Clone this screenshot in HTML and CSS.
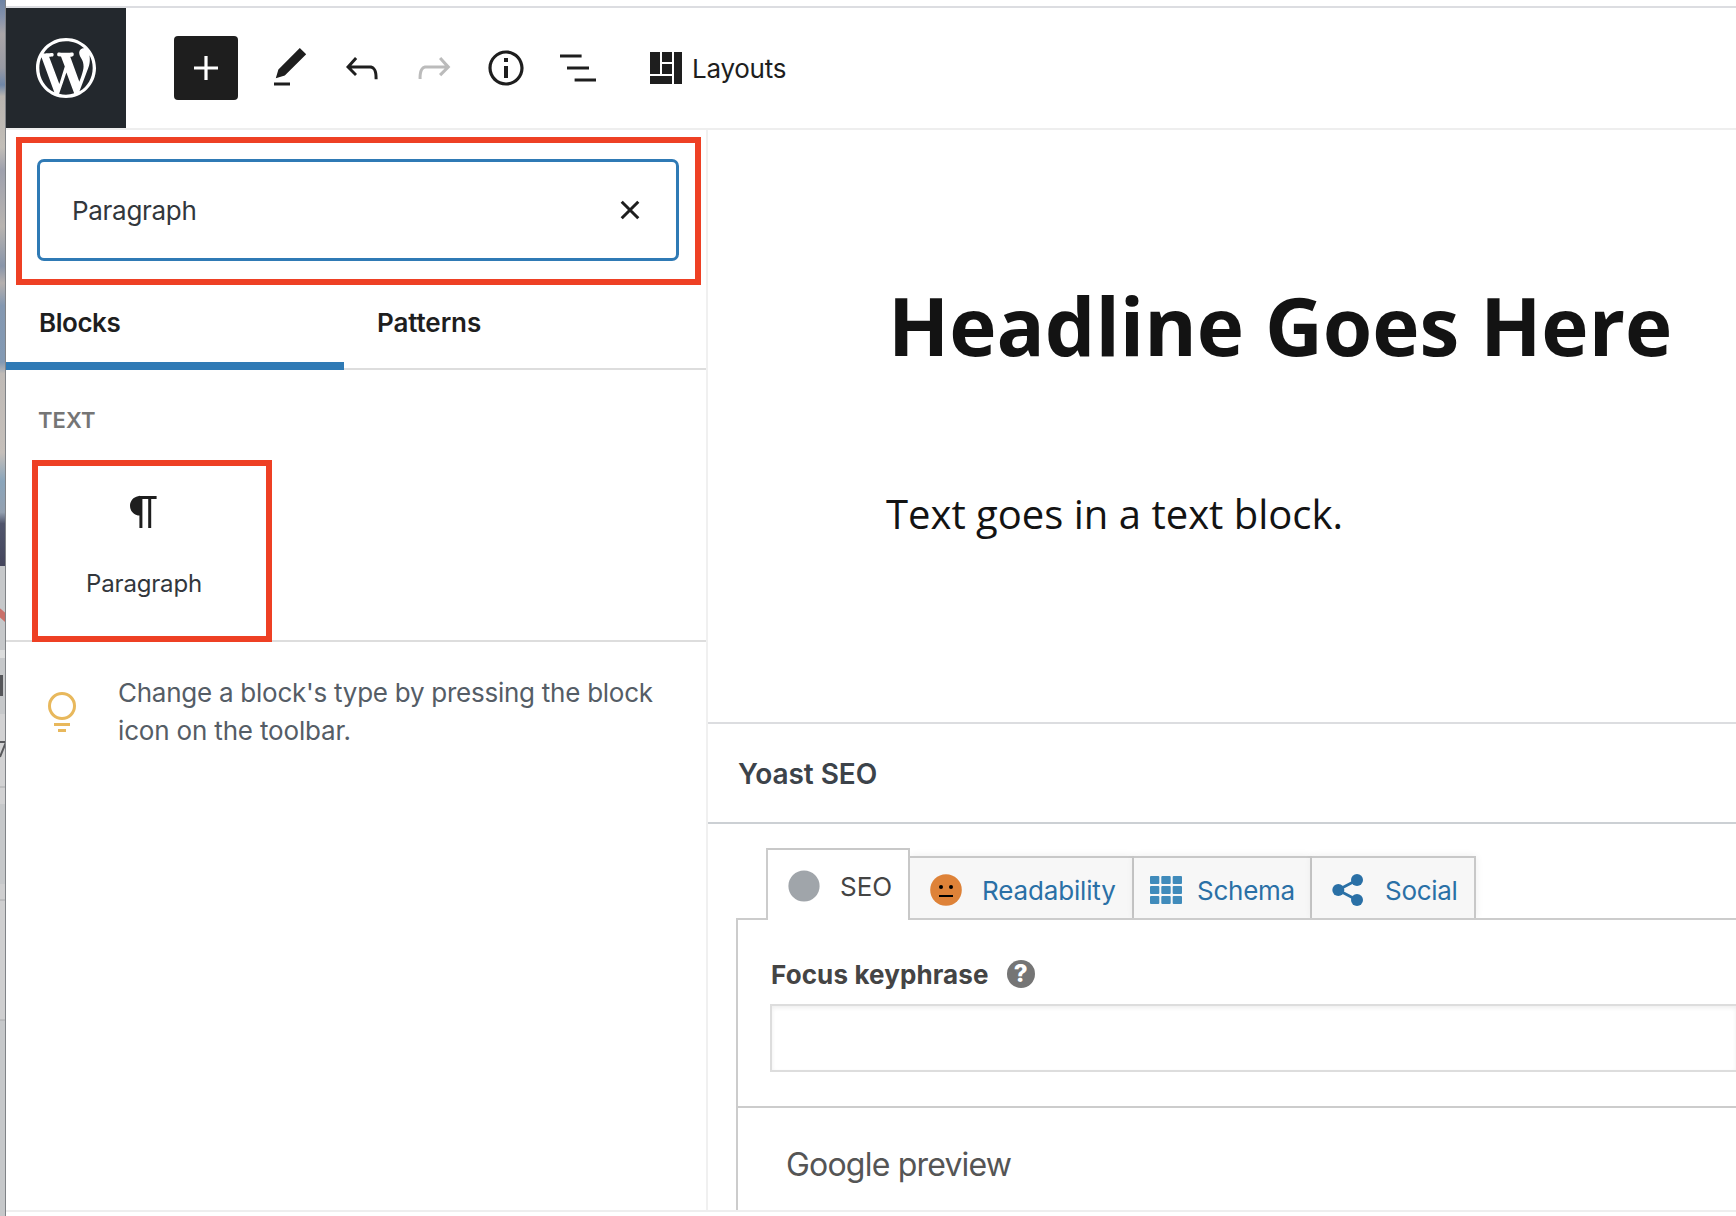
FILE: index.html
```html
<!DOCTYPE html>
<html lang="en">
<head>
<meta charset="utf-8">
<title>Edit Page</title>
<link rel="stylesheet" href="styles.css">
</head>
<body>
<div class="screen">
  <svg class="backdrop" viewBox="0 0 6 1216" aria-hidden="true">
    <defs>
      <linearGradient id="sky" x1="0" y1="0" x2="0" y2="1">
        <stop offset="0" stop-color="#6d83a4"/><stop offset=".03" stop-color="#8592ab"/><stop offset=".06" stop-color="#aaa6a8"/>
        <stop offset=".12" stop-color="#989aa3"/><stop offset=".15" stop-color="#6f87a8"/><stop offset=".17" stop-color="#b9b5b0"/>
        <stop offset=".26" stop-color="#c2beb8"/><stop offset=".3" stop-color="#9fa1ad"/><stop offset=".4" stop-color="#b8b4b0"/>
        <stop offset=".47" stop-color="#8995a9"/><stop offset=".5" stop-color="#b5b0ae"/><stop offset=".54" stop-color="#8498b1"/>
        <stop offset=".64" stop-color="#8299b3"/><stop offset=".66" stop-color="#bfbab6"/><stop offset=".8" stop-color="#c5bfba"/>
        <stop offset=".85" stop-color="#8aa5bb"/><stop offset=".905" stop-color="#93a0b0"/><stop offset=".925" stop-color="#50556c"/>
        <stop offset="1" stop-color="#44455c"/>
      </linearGradient>
    </defs>
    <rect width="6" height="566" fill="url(#sky)"/>
    <rect y="566" width="6" height="650" fill="#c6c8ca"/>
    <rect y="650" width="6" height="8" fill="#dcdddd"/>
    <rect y="714" width="6" height="90" fill="#d2d2d3"/>
    <rect y="884" width="6" height="136" fill="#cfcfd0"/>
    <path d="M-2 611l10 9" stroke="#c9706a" stroke-width="7"/>
    <rect y="675" width="3" height="21" fill="#55565a"/>
    <path d="M0 742h6L0 757" fill="none" stroke="#58595c" stroke-width="2"/>
    <path d="M0 787h6M0 900h6M0 1020h6" stroke="#a9aaac"/>
    <rect x="5" width="1" height="1216" fill="#808387"/>
  </svg>
  <div class="editor">
    <header class="topbar">
      <a class="logo"><svg width="60" height="60" viewBox="0 0 20 20"><path fill="#fff" d="M20 10c0-5.51-4.49-10-10-10C4.48 0 0 4.49 0 10c0 5.52 4.48 10 10 10 5.51 0 10-4.48 10-10zM7.78 15.37L4.37 6.22c.55-.02 1.17-.08 1.17-.08.5-.06.44-1.13-.06-1.11 0 0-1.45.11-2.37.11-.18 0-.37 0-.58-.01C4.12 2.69 6.87 1.11 10 1.11c2.33 0 4.45.87 6.05 2.34-.68-.11-1.65.39-1.65 1.58 0 .74.45 1.36.9 2.1.35.61.55 1.36.55 2.46 0 1.49-1.4 5-1.4 5l-3.03-8.37c.54-.02.82-.17.82-.17.5-.05.44-1.25-.06-1.22 0 0-1.44.12-2.38.12-.87 0-2.33-.12-2.33-.12-.5-.03-.56 1.2-.06 1.22l.92.08 1.26 3.41zM17.41 10c.24-.64.74-1.87.43-4.25.7 1.29 1.05 2.71 1.05 4.25 0 3.29-1.73 6.24-4.4 7.78.97-2.59 1.94-5.2 2.92-7.78zM6.1 18.09C3.12 16.65 1.11 13.53 1.11 10c0-1.3.23-2.48.72-3.59C3.25 10.3 4.67 14.2 6.1 18.09zm4.03-6.63l2.58 6.98c-.86.29-1.76.45-2.71.45-.79 0-1.57-.11-2.29-.33.81-2.38 1.62-4.74 2.42-7.1z"/></svg></a>
      <span class="add"><svg class="icon" viewBox="0 0 24 24"><path d="M18 11.2h-5.2V6h-1.6v5.2H6v1.6h5.2V18h1.6v-5.2H18z"/></svg></span>
      <nav class="tools">
        <svg class="icon" viewBox="0 0 24 24"><path d="M20.1 5.1L16.9 2 6.2 12.7l-1.3 4.4 4.5-1.3L20.1 5.1zM4 20.8h8v-1.5H4v1.5z"/></svg>
        <svg class="icon" viewBox="0 0 24 24"><path d="M18.3 11.7c-.6-.6-1.4-.9-2.3-.9H6.7l2.9-3.3-1.1-1-4.5 5L8.5 16l1-1-2.7-2.7H16c.5 0 .9.2 1.3.5 1 1 1 3.4 1 4.5v.3h1.5v-.2c0-1.5 0-4.3-1.5-5.7z"/></svg>
        <svg class="icon disabled" viewBox="0 0 24 24"><path d="M15.6 6.5l-1.1 1 2.9 3.3H8c-.9 0-1.7.3-2.3.9-1.4 1.5-1.4 4.2-1.4 5.6v.2h1.5v-.3c0-1.1 0-3.5 1-4.5.3-.3.7-.5 1.3-.5h9.2L14.5 15l1.1 1.1 4.6-4.6-4.6-5z"/></svg>
        <svg class="icon" viewBox="0 0 24 24"><path d="M12 3.2c-4.8 0-8.8 3.9-8.8 8.8 0 4.8 3.9 8.8 8.8 8.8 4.8 0 8.8-3.9 8.8-8.8 0-4.8-4-8.8-8.8-8.8zm0 16c-4 0-7.2-3.3-7.2-7.2C4.8 8 8 4.8 12 4.8s7.2 3.3 7.2 7.2c0 4-3.2 7.2-7.2 7.2zM11 17h2v-6h-2v6zm0-8h2V7h-2v2z"/></svg>
        <svg class="icon" viewBox="0 0 24 24"><path d="M3 5.2h10.8v1.5H3zM6.5 11.2h11v1.5h-11zM10.3 17.2H21v1.5H10.3z"/></svg>
      </nav>
      <div class="layouts">
        <svg width="32" height="32" viewBox="0 0 32 32"><path fill="#1e1e1e" d="M0 0h10v22H0zM12 0h10v10H12zM12 12h10v10H12zM24 0h8v32h-8zM0 24h22v8H0z"/></svg>
        <span class="t-layouts">Layouts</span>
      </div>
    </header>
    <div class="body">
      <aside class="inserter">
        <div class="search-mark">
          <div class="search">
            <span class="t-query">Paragraph</span>
            <svg width="20" height="20" viewBox="0 0 20 20"><path d="M1.7 1.7l16.6 16.6M18.3 1.7L1.7 18.3" stroke="#1e1e1e" stroke-width="3"/></svg>
          </div>
        </div>
        <div class="tabs">
          <div class="tab active"><span class="t-blocks">Blocks</span></div>
          <div class="tab"><span class="t-patterns">Patterns</span></div>
        </div>
        <section class="results">
          <h2 class="category">TEXT</h2>
          <div class="block-mark">
            <svg class="icon" viewBox="0 0 24 24"><path d="M18.3 4H9.9v-.1l-.9.2c-2.3.4-4 2.4-4 4.8s1.7 4.4 4 4.8l.7.1V20h1.5V5.5h2.9V20h1.5V5.5h2.7V4z"/></svg>
            <span class="t-label">Paragraph</span>
          </div>
        </section>
        <div class="tip">
          <svg width="28" height="40" viewBox="0 0 28 40"><circle cx="14" cy="14" r="12.5" fill="none" stroke="#e8b85c" stroke-width="3"/><path d="M6 31h16v3H6zM10 37h8v3h-8z" fill="#e8b85c"/></svg>
          <p><span class="t-tip1">Change a block's type by pressing the block</span><br><span class="t-tip2">icon on the toolbar.</span></p>
        </div>
      </aside>
      <main class="content">
        <div class="canvas">
          <h1>Headline Goes Here</h1>
          <p>Text goes in a text block.</p>
        </div>
        <section class="yoast">
          <h2 class="yoast-title">Yoast SEO</h2>
          <div class="seo-tabs">
            <div class="seo-tab current"><svg width="32" height="32" viewBox="0 0 32 32"><circle cx="16" cy="16" r="15.6" fill="#a0a5aa"/></svg><span>SEO</span></div>
            <div class="seo-tab read"><svg width="32" height="32" viewBox="0 0 32 32"><circle cx="16" cy="16" r="15.8" fill="#de8238"/><circle cx="11" cy="13" r="2" fill="#000"/><circle cx="21" cy="13" r="2" fill="#000"/><path d="M9 21h14v2H9z" fill="#000"/></svg><span>Readability</span></div>
            <div class="seo-tab schema"><svg width="32" height="28" viewBox="0 0 32 28" fill="#408bbb"><rect width="9.3" height="8" rx="1"/><rect x="11.3" width="9.4" height="8" rx="1"/><rect x="22.7" width="9.3" height="8" rx="1"/><rect y="10" width="9.3" height="8" rx="1"/><rect x="11.3" y="10" width="9.4" height="8" rx="1"/><rect x="22.7" y="10" width="9.3" height="8" rx="1"/><rect y="20" width="9.3" height="8" rx="1"/><rect x="11.3" y="20" width="9.4" height="8" rx="1"/><rect x="22.7" y="20" width="9.3" height="8" rx="1"/></svg><span>Schema</span></div>
            <div class="seo-tab social"><svg width="32" height="32" viewBox="0 0 32 32"><path d="M25 6L6 16l19 10" fill="none" stroke="#2a70a6" stroke-width="2.8"/><g fill="#2a70a6"><circle cx="6.3" cy="16" r="6"/><circle cx="25" cy="6" r="6"/><circle cx="25" cy="26" r="6"/></g></svg><span>Social</span></div>
          </div>
          <div class="panel">
            <div class="keyphrase">
              <div class="label"><span class="t-focus">Focus keyphrase</span><span class="help">?</span></div>
              <div class="field"></div>
            </div>
            <div class="preview">Google preview</div>
          </div>
        </section>
      </main>
    </div>
    <footer class="statusbar"></footer>
  </div>
</div>
</body>
</html>
```
FILE: styles.css
```css
* { box-sizing: border-box; }
body { margin: 0; background: #fff; font-family: Inter, "Liberation Sans", sans-serif; color: #1e1e1e; }
h1, h2, p { margin: 0; }
svg { display: block; flex: none; }

.screen { display: flex; width: 1736px; height: 1216px; overflow: hidden; white-space: nowrap; }
.backdrop { width: 6px; height: 1216px; }
.editor { flex: 1; min-width: 0; display: flex; flex-direction: column; padding-top: 6px; }
.icon { width: 48px; height: 48px; fill: #1e1e1e; }
.icon.disabled { fill: #bbb; }

/* Top toolbar */
.topbar { display: flex; align-items: center; height: 124px; flex: none; border-top: 2px solid #dcdde1; border-bottom: 2px solid #eee; }
.logo { width: 120px; height: 120px; background: #23282d; display: flex; align-items: center; justify-content: center; }
.add { width: 64px; height: 64px; margin-left: 48px; background: #1e1e1e; border-radius: 4px; display: flex; align-items: center; justify-content: center; }
.add .icon { fill: #fff; }
.tools { display: flex; gap: 24px; margin-left: 28px; }
.layouts { display: flex; align-items: center; gap: 10px; margin-left: 48px; font-size: 26px; }
.t-layouts { padding-top: 1px; letter-spacing: -.25px; }

/* Block inserter */
.body { flex: 1; min-height: 0; display: flex; }
.inserter { width: 702px; border-right: 2px solid #f0f0f0; display: flex; flex-direction: column; }
.search-mark { margin: 7px 0 0 10px; width: 685px; height: 148px; border: 6px solid #ee4024; padding: 16px 15px; flex: none; }
.search { width: 642px; height: 102px; border: 3px solid #2f7ab5; border-radius: 7px; display: flex; align-items: center; justify-content: space-between; padding: 0 36px 0 32px; font-size: 26px; color: #32373c; }
.t-query { letter-spacing: -.3px; }
.tabs { display: flex; height: 85px; flex: none; border-bottom: 2px solid #ddd; font-size: 26px; font-weight: 600; }
.tab { width: 338px; height: 85px; padding: 22px 32px 0 33px; line-height: 32px; }
.tab.active { border-bottom: 8px solid #2f7ab5; }
.t-blocks { letter-spacing: -.45px; }
.t-patterns { letter-spacing: -.1px; }
.results { height: 272px; flex: none; border-bottom: 2px solid #ddd; padding: 36px 0 0 26px; }
.category { height: 54px; padding-left: 6px; font-size: 22px; line-height: 28px; font-weight: 600; letter-spacing: .1px; color: #757575; }
.block-mark { width: 240px; height: 182px; border: 6px solid #ee4024; display: flex; flex-direction: column; align-items: center; padding: 22px 16px 0 0; gap: 33px; font-size: 24px; line-height: 29px; color: #32373c; }
.t-label { letter-spacing: -.17px; }
.tip { display: flex; padding: 32px 0 0 42px; gap: 42px; font-size: 26px; line-height: 38px; color: #555d66; }
.tip svg { margin-top: 18px; }
.t-tip1 { letter-spacing: -.257px; }
.t-tip2 { letter-spacing: -.17px; }

/* Page canvas */
.content { flex: 1; min-width: 0; display: flex; flex-direction: column; }
.canvas { height: 592px; flex: none; padding: 140px 0 0 178px; font-family: "Open Sans", sans-serif; color: #131313; }
.canvas h1 { padding-left: 2px; font-size: 80px; line-height: 110px; font-weight: 700; }
.canvas p { margin-top: 106px; font-size: 40px; line-height: 56px; }

/* Yoast SEO box */
.yoast { flex: 1; min-height: 0; border-top: 2px solid #dcdde0; display: flex; flex-direction: column; }
.yoast-title { height: 100px; flex: none; padding-left: 30px; border-bottom: 2px solid #ccd0d4; font-size: 28px; line-height: 100px; font-weight: 600; letter-spacing: -.05px; color: #3c434a; }
.seo-tabs { display: flex; align-items: flex-end; height: 94px; flex: none; padding-left: 58px; }
.seo-tab { height: 62px; display: flex; align-items: center; background: #f7f7f7; border: 2px solid #c8c8c8; border-left: 0; border-bottom: 0; padding-top: 4px; font-size: 26px; color: #2a70a6; box-shadow: 0 0 8px rgba(0, 0, 0, .07); }
.seo-tab.current { position: relative; z-index: 1; width: 144px; height: 72px; margin-bottom: -2px; border-left: 2px solid #ccc; background: #fff; color: #444; box-shadow: none; padding: 2px 0 0 20px; gap: 20px; }
.seo-tab.read { width: 224px; padding-left: 20px; gap: 20px; letter-spacing: -.15px; }
.seo-tab.schema { width: 178px; padding-left: 16px; gap: 15px; letter-spacing: -.25px; }
.seo-tab.social { width: 164px; padding-left: 20px; gap: 21px; letter-spacing: -.3px; }
.panel { flex: 1; margin-left: 28px; border-top: 2px solid #ccc; border-left: 2px solid #ccc; background: #fff; position: relative; }
.keyphrase { height: 188px; border-bottom: 2px solid #ccc; padding: 38px 0 0 32px; }
.label { display: flex; align-items: center; height: 32px; gap: 18px; padding-left: 1px; font-size: 26px; font-weight: 700; color: #444; }
.t-focus { letter-spacing: .12px; }
.help { width: 28px; height: 28px; border-radius: 50%; background: #757575; color: #fff; font-size: 24px; line-height: 28px; text-align: center; font-weight: 800; }
.field { height: 68px; margin-top: 14px; border: 2px solid #ddd; border-right: 0; box-shadow: inset 0 2px 4px rgba(0, 0, 0, .07); }
.preview { padding: 36px 0 0 48px; font-size: 32px; line-height: 42px; letter-spacing: -.8px; color: #555; }
.statusbar { height: 6px; flex: none; border-top: 2px solid #eee; background: #fff; }
```
